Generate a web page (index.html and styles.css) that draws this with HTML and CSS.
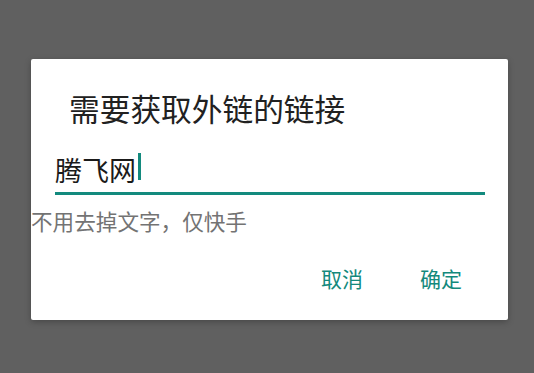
FILE: index.html
```html
<!DOCTYPE html>
<html lang="zh-CN">
<head>
<meta charset="utf-8">
<title>需要获取外链的链接</title>
<link rel="stylesheet" href="styles.css">
</head>
<body>
<div class="dialog">
  <div class="title">需要获取外链的链接</div>
  <div class="input"><span class="value">腾飞网</span><span class="caret"></span></div>
  <div class="hint">不用去掉文字，仅快手</div>
  <div class="actions">
    <span class="btn">取消</span>
    <span class="btn">确定</span>
  </div>
</div>
</body>
</html>
```
FILE: styles.css
```css
html, body {
  margin: 0;
  padding: 0;
}
body {
  background: #606060;
  width: 534px;
  height: 373px;
  overflow: hidden;
  font-family: "Noto Sans CJK SC", "Noto Sans", sans-serif;
  padding-top: 59px;
  box-sizing: border-box;
}
.dialog {
  margin-left: 31px;
  width: 477px;
  background: #ffffff;
  border-radius: 2px;
  box-shadow: 0 2px 6px rgba(0,0,0,0.25);
  padding: 29px 0 24px 0;
  box-sizing: border-box;
}
.title {
  font-size: 30.7px;
  line-height: 40px;
  color: #212121;
  padding-left: 38px;
}
.input {
  margin: 24px 23px 0 24px;
  font-size: 27px;
  line-height: 36px;
  height: 36px;
  color: #1a1a1a;
  padding-bottom: 4px;
  border-bottom: 3px solid #138a7e;
  display: flex;
  align-items: flex-start;
}
.value {
  display: block;
}
.caret {
  display: block;
  width: 3px;
  height: 27px;
  margin-top: 1px;
  margin-left: 2px;
  background: #138a7e;
}
.hint {
  margin-top: 12px;
  font-size: 21.6px;
  line-height: 28px;
  color: #737373;
  padding-left: 0;
}
.actions {
  margin-top: 25px;
  display: flex;
  justify-content: flex-end;
  gap: 3px;
  padding-right: 19px;
}
.btn {
  width: 96px;
  text-align: center;
  font-size: 21px;
  line-height: 36px;
  color: #13897c;
}
```
